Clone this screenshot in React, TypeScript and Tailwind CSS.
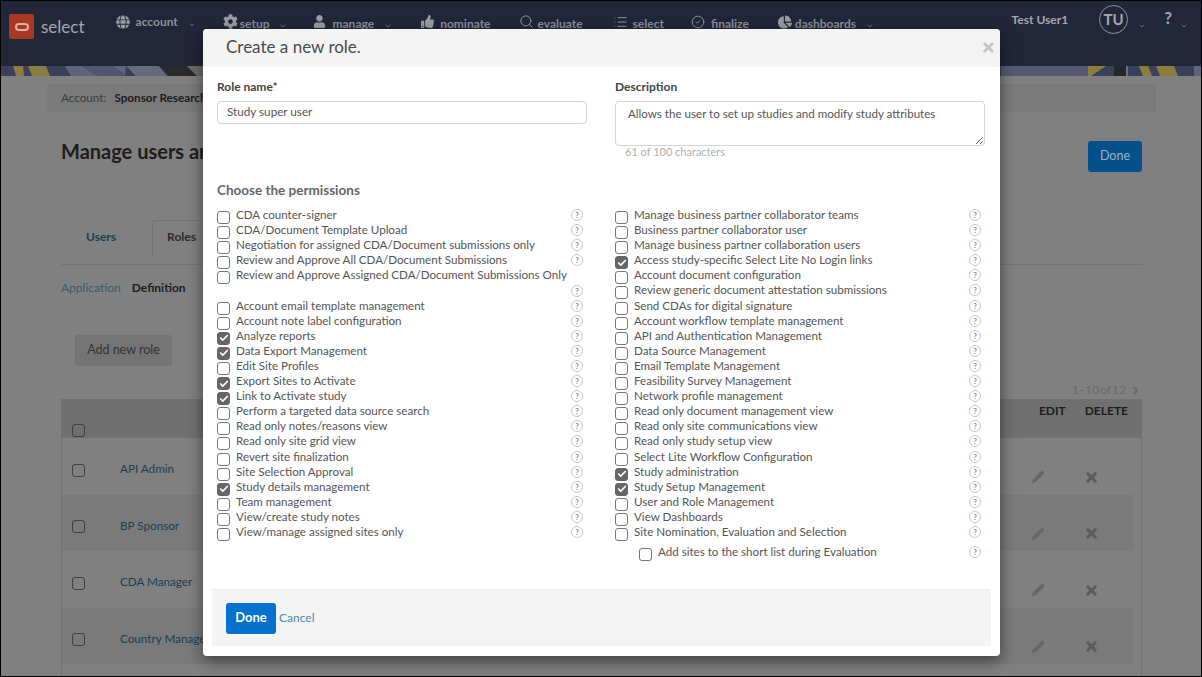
import React from "react";
import { Check, Pencil, X, ChevronDown, ChevronRight, Search, List, CircleCheck } from "lucide-react";
import { FaGlobe, FaCog, FaUser, FaThumbsUp, FaChartPie } from "react-icons/fa";

const left: [string, boolean][] = [
  ["CDA counter-signer", false],
  ["CDA/Document Template Upload", false],
  ["Negotiation for assigned CDA/Document submissions only", false],
  ["Review and Approve All CDA/Document Submissions", false],
  ["Review and Approve Assigned CDA/Document Submissions Only", false],
  ["Account email template management", false],
  ["Account note label configuration", false],
  ["Analyze reports", true],
  ["Data Export Management", true],
  ["Edit Site Profiles", false],
  ["Export Sites to Activate", true],
  ["Link to Activate study", true],
  ["Perform a targeted data source search", false],
  ["Read only notes/reasons view", false],
  ["Read only site grid view", false],
  ["Revert site finalization", false],
  ["Site Selection Approval", false],
  ["Study details management", true],
  ["Team management", false],
  ["View/create study notes", false],
  ["View/manage assigned sites only", false],
];
const right: [string, boolean][] = [
  ["Manage business partner collaborator teams", false],
  ["Business partner collaborator user", false],
  ["Manage business partner collaboration users", false],
  ["Access study-specific Select Lite No Login links", true],
  ["Account document configuration", false],
  ["Review generic document attestation submissions", false],
  ["Send CDAs for digital signature", false],
  ["Account workflow template management", false],
  ["API and Authentication Management", false],
  ["Data Source Management", false],
  ["Email Template Management", false],
  ["Feasibility Survey Management", false],
  ["Network profile management", false],
  ["Read only document management view", false],
  ["Read only site communications view", false],
  ["Read only study setup view", false],
  ["Select Lite Workflow Configuration", false],
  ["Study administration", true],
  ["Study Setup Management", true],
  ["User and Role Management", false],
  ["View Dashboards", false],
  ["Site Nomination, Evaluation and Selection", false],
];

function Box({ on, dim }: { on?: boolean; dim?: boolean }) {
  return (
    <span
      className={`flex h-[13px] w-[13px] shrink-0 items-center justify-center rounded-[3px] border ${
        dim ? "border-[#3f3f3f]" : on ? "border-[#666] bg-[#666]" : "border-[#777] bg-white"
      }`}
    >
      {on && <Check size={10} strokeWidth={4} className="text-white" />}
    </span>
  );
}

function Help() {
  return (
    <span className="flex h-[12px] w-[12px] shrink-0 items-center justify-center rounded-full border border-[#c8c8c8] text-[8px] font-bold leading-none text-[#8a8a8a]">
      ?
    </span>
  );
}

function Row({ label, on, wrap }: { label: string; on: boolean; wrap?: boolean }) {
  return (
    <div className={`flex pr-[4px] ${wrap ? "h-[30.2px]" : "h-[15.1px]"}`}>
      <span className="mt-[4px]">
        <Box on={on} />
      </span>
      <span className="ml-[6px] h-[15.1px] flex-1 whitespace-nowrap leading-[15.1px]">{label}</span>
      <span className={wrap ? "mt-[17.5px]" : "mt-[2px]"}>
        <Help />
      </span>
    </div>
  );
}

function NavItem({
  icon,
  label,
  ml,
  gap = "ml-[5px]",
  raised,
  chevron,
}: {
  icon: React.ReactNode;
  label: string;
  ml: string;
  gap?: string;
  raised?: boolean;
  chevron?: boolean;
}) {
  return (
    <div className={`flex items-start ${ml}`}>
      <span className="mt-[13px] flex h-[15px] w-[15px] items-center justify-center text-[#9a9ca3]">{icon}</span>
      <span className={`${gap} ${raised ? "mt-[12px]" : "mt-[14px]"} text-[12px] font-bold leading-[18px] text-[#8c8f9c]`}>
        {label}
      </span>
      {chevron && (
        <span className={`ml-[10px] ${raised ? "mt-[20px]" : "mt-[21px]"} text-[#8c8f9c]`}>
          <ChevronDown size={8} strokeWidth={2} />
        </span>
      )}
    </div>
  );
}

function TableRow({ name, even }: { name: string; even?: boolean }) {
  return (
    <div className={`flex h-[56.5px] w-[1072px] items-center ${even ? "bg-[#7a7a7a]" : ""}`}>
      <span className="ml-[10px] mt-[8px]">
        <Box dim />
      </span>
      <span className="ml-[35px] mt-[6px] text-[11.7px] text-[#1c3f52]">{name}</span>
      <span className="ml-auto mt-[22px] flex items-center">
        <Pencil size={14} fill="#656565" strokeWidth={1} className="text-[#656565]" />
        <X size={15} strokeWidth={5} className="ml-[39px] mr-[35px] text-[#5c5c5c]" />
      </span>
    </div>
  );
}

export default function App() {
  return (
    <div
      className="relative h-[677px] w-[1202px] overflow-hidden border border-black bg-[#808080] text-[12px]"
      style={{ fontFamily: "Lato, 'Noto Sans', sans-serif" }}
    >
      {/* Header */}
      <header className="flex h-[65px] bg-[#222639]">
        <div className="ml-[8px] mt-[13px] flex h-[25px] w-[25px] items-center justify-center rounded-[2px] bg-[#a93a22]">
          <span className="h-[8px] w-[14px] rounded-full border-2 border-[#d9b0a6]" />
        </div>
        <span className="ml-[7px] mt-[14px] text-[17px] leading-[24px] text-[#a5a7ae]">select</span>
        <NavItem ml="ml-[31px]" icon={<FaGlobe size={14} />} label="account" raised chevron />
        <NavItem ml="ml-[27px]" gap="ml-[2px]" icon={<FaCog size={15} />} label="setup" chevron />
        <NavItem ml="ml-[25px]" icon={<FaUser size={13} />} label="manage" chevron />
        <NavItem ml="ml-[28px]" icon={<FaThumbsUp size={13} />} label="nominate" />
        <NavItem ml="ml-[29px]" gap="ml-[3px]" icon={<Search size={15} strokeWidth={1.5} />} label="evaluate" />
        <NavItem ml="ml-[30px]" icon={<List size={16} strokeWidth={1.5} />} label="select" />
        <NavItem ml="ml-[27px]" icon={<CircleCheck size={14} strokeWidth={1.5} />} label="finalize" />
        <NavItem ml="ml-[29px]" gap="ml-[2px]" icon={<FaChartPie size={14} />} label="dashboards" chevron />
        <div className="ml-auto flex pr-[13px]">
          <span className="mt-[10px] whitespace-nowrap text-[12px] font-bold leading-[18px] text-[#a5a7ae]">Test User1</span>
          <div className="ml-[31px] mt-[4px] flex h-[29px] w-[29px] items-center justify-center rounded-full border border-[#8f919b] text-[15px] font-bold text-[#a5a7ae]">
            TU
          </div>
          <span className="ml-[10px] mt-[21px] text-[#8c8f9c]">
            <ChevronDown size={8} />
          </span>
          <span className="ml-[18px] mt-[5px] text-[17px] font-bold leading-[24px] text-[#a5a7ae]">?</span>
          <span className="ml-[8px] mt-[21px] text-[#8c8f9c]">
            <ChevronDown size={8} />
          </span>
        </div>
      </header>

      {/* Decorative banner */}
      <svg width="1200" height="10" className="block" viewBox="0 0 1200 10">
        <rect width="1200" height="10" fill="#3a405a" />
        <polygon points="12,0 22,0 23,10 15,10" fill="#8a7e3e" />
        <polygon points="27,0 45,0 49,10 31,10" fill="#8a7e3e" />
        <polygon points="64,0 125,0 124,10 70,10" fill="#5f6479" />
        <polygon points="80,0 112,0 124,8 124,10 96,10" fill="#50566f" />
        <polygon points="125,0 158,0 166,10 135,10" fill="#666a7d" />
        <polygon points="158,0 186,0 196,10 168,10" fill="#2a2a2d" />
        <polygon points="186,0 203,0 203,10 196,10" fill="#6c6c66" />
        <rect x="1000" y="0" width="87" height="10" fill="#555a71" />
        <polygon points="1087,0 1105,0 1090,10 1087,10" fill="#8a7e3e" />
        <rect x="1113" y="0" width="12" height="10" fill="#25262a" />
        <rect x="1125" y="0" width="2" height="10" fill="#6b6f80" />
        <polygon points="1138,0 1147,0 1151,10 1142,10" fill="#8a7e3e" />
        <polygon points="1155,0 1173,0 1177,10 1159,10" fill="#8a7e3e" />
        <rect x="1193" y="0" width="7" height="10" fill="#5f6479" />
      </svg>

      {/* Page beneath dialog */}
      <main className="pl-[46px]">
        <div className="mt-[8px] flex h-[28px] w-[1109px] items-center bg-[#7a7a7a] pl-[14px] text-[11.7px]">
          <span className="text-[#3c3c3c]">Account:</span>
          <span className="ml-[8px] font-bold text-[#1d1d1d]">Sponsor Research</span>
        </div>
        <div className="ml-[14px] mt-[25px] flex w-[1081px] items-start justify-between">
          <h1 className="mt-[1px] text-[20px] font-bold leading-[26px] text-[#1d1d1d]">Manage users and roles</h1>
          <div className="mt-[4px] flex h-[31px] w-[54px] items-center justify-center rounded-[3px] bg-[#04518b] text-[12.5px] text-[#9db1c3]">
            Done
          </div>
        </div>
        <div className="ml-[14px] mt-[48px] flex h-[45px] w-[1081px] items-start border-b border-[#747474]">
          <span className="ml-[25px] mt-[8px] font-bold text-[#1c3f52]">Users</span>
          <span className="ml-[36px] h-[37px] w-[80px] rounded-t-[3px] border border-b-0 border-[#747474] pl-[14px] pt-[7px] font-bold text-[#2b2b2b]">
            Roles
          </span>
        </div>
        <div className="ml-[14px] mt-[15px] flex leading-[16px]">
          <span className="text-[#3a5a70]">Application</span>
          <span className="ml-[11px] font-bold text-[#1d1d1d]">Definition</span>
        </div>
        <div className="ml-[28px] mt-[39px] flex h-[31px] w-[97px] items-center justify-center rounded-[3px] bg-[#747474] text-[12.5px] text-[#333]">
          Add new role
        </div>
        <div className="ml-[14px] mt-[16px] flex w-[1081px] items-center justify-end text-[12px] leading-[16px] text-[#6a6a6a] [word-spacing:-2px]">
          1 - 10 of 12
          <ChevronRight size={13} strokeWidth={4} className="ml-[3px]" />
        </div>
        <div className="ml-[14px] mt-[1px] w-[1081px] border-x border-[#727272]">
          <div className="relative flex h-[39px] justify-end bg-[#707070] pt-[3px] text-[12px] font-bold text-[#1d1d1d]">
            <span className="absolute bottom-[1px] left-[10px]">
              <Box dim />
            </span>
            <span className="mr-[19px]">EDIT</span>
            <span className="mr-[13px]">DELETE</span>
          </div>
          <TableRow name="API Admin" />
          <TableRow name="BP Sponsor" even />
          <TableRow name="CDA Manager" />
          <TableRow name="Country Manager" even />
          <div className="h-[20px]" />
        </div>
      </main>

      {/* Dialog */}
      <div className="absolute left-[202px] top-[28px] flex h-[627px] w-[797px] flex-col rounded-[4px] bg-white text-[#555] shadow-[0_5px_15px_rgba(0,0,0,0.5)]">
        <div className="flex h-[38px] items-center justify-between rounded-t-[4px] bg-[#f4f4f4] pb-[2px] pl-[23px] pr-[4px]">
          <h2 className="text-[17px] text-[#4a4a4a]">Create a new role.</h2>
          <X size={15} strokeWidth={4.5} className="text-[#c4c4c4]" />
        </div>
        <div className="flex-1 px-[14px]">
          <div className="flex gap-[28px]">
            <div className="w-[370px]">
              <label className="mt-[12px] block text-[12px] font-bold leading-[15px] text-[#444]">Role name*</label>
              <input
                readOnly
                value="Study super user"
                className="mt-[7px] block h-[23px] w-full rounded-[4px] border border-[#d4d4d4] px-[9px] pb-[3px] text-[11.7px] text-[#555] outline-none"
              />
            </div>
            <div className="w-[370px]">
              <label className="mt-[12px] block text-[12px] font-bold leading-[15px] text-[#444]">Description</label>
              <textarea
                readOnly
                value="Allows the user to set up studies and modify study attributes"
                className="mt-[7px] block h-[45px] w-full rounded-[4px] border border-[#d4d4d4] px-[12px] py-[5px] text-[11.6px] leading-[14px] text-[#555] outline-none"
              />
              <div className="ml-[10px] text-[11px] leading-[12px] text-[#b0b0b0]">61 of 100 characters</div>
            </div>
          </div>
          <h3 className="mt-[23px] text-[13.5px] font-bold leading-[18px] text-[#666]">Choose the permissions</h3>
          <div className="mt-[8px] flex gap-[28px] text-[11.6px] leading-[15px]">
            <div className="w-[370px]">
              {left.map(([label, on], i) => (
                <Row key={label} label={label} on={on} wrap={i === 4} />
              ))}
            </div>
            <div className="w-[370px]">
              {right.map(([label, on]) => (
                <Row key={label} label={label} on={on} />
              ))}
              <div className="ml-[24px] mt-[5px]">
                <Row label="Add sites to the short list during Evaluation" on={false} />
              </div>
            </div>
          </div>
        </div>
        <div className="mx-[9px] mb-[10px] flex h-[57px] items-center border-t border-[#ececec] bg-[#f4f4f4] pl-[14px]">
          <div className="flex h-[31px] w-[50px] items-center justify-center rounded-[3px] bg-[#0572ce] text-[13px] font-bold text-white">
            Done
          </div>
          <span className="ml-[3px] text-[12px] text-[#4f8ba8]">Cancel</span>
        </div>
      </div>
    </div>
  );
}
